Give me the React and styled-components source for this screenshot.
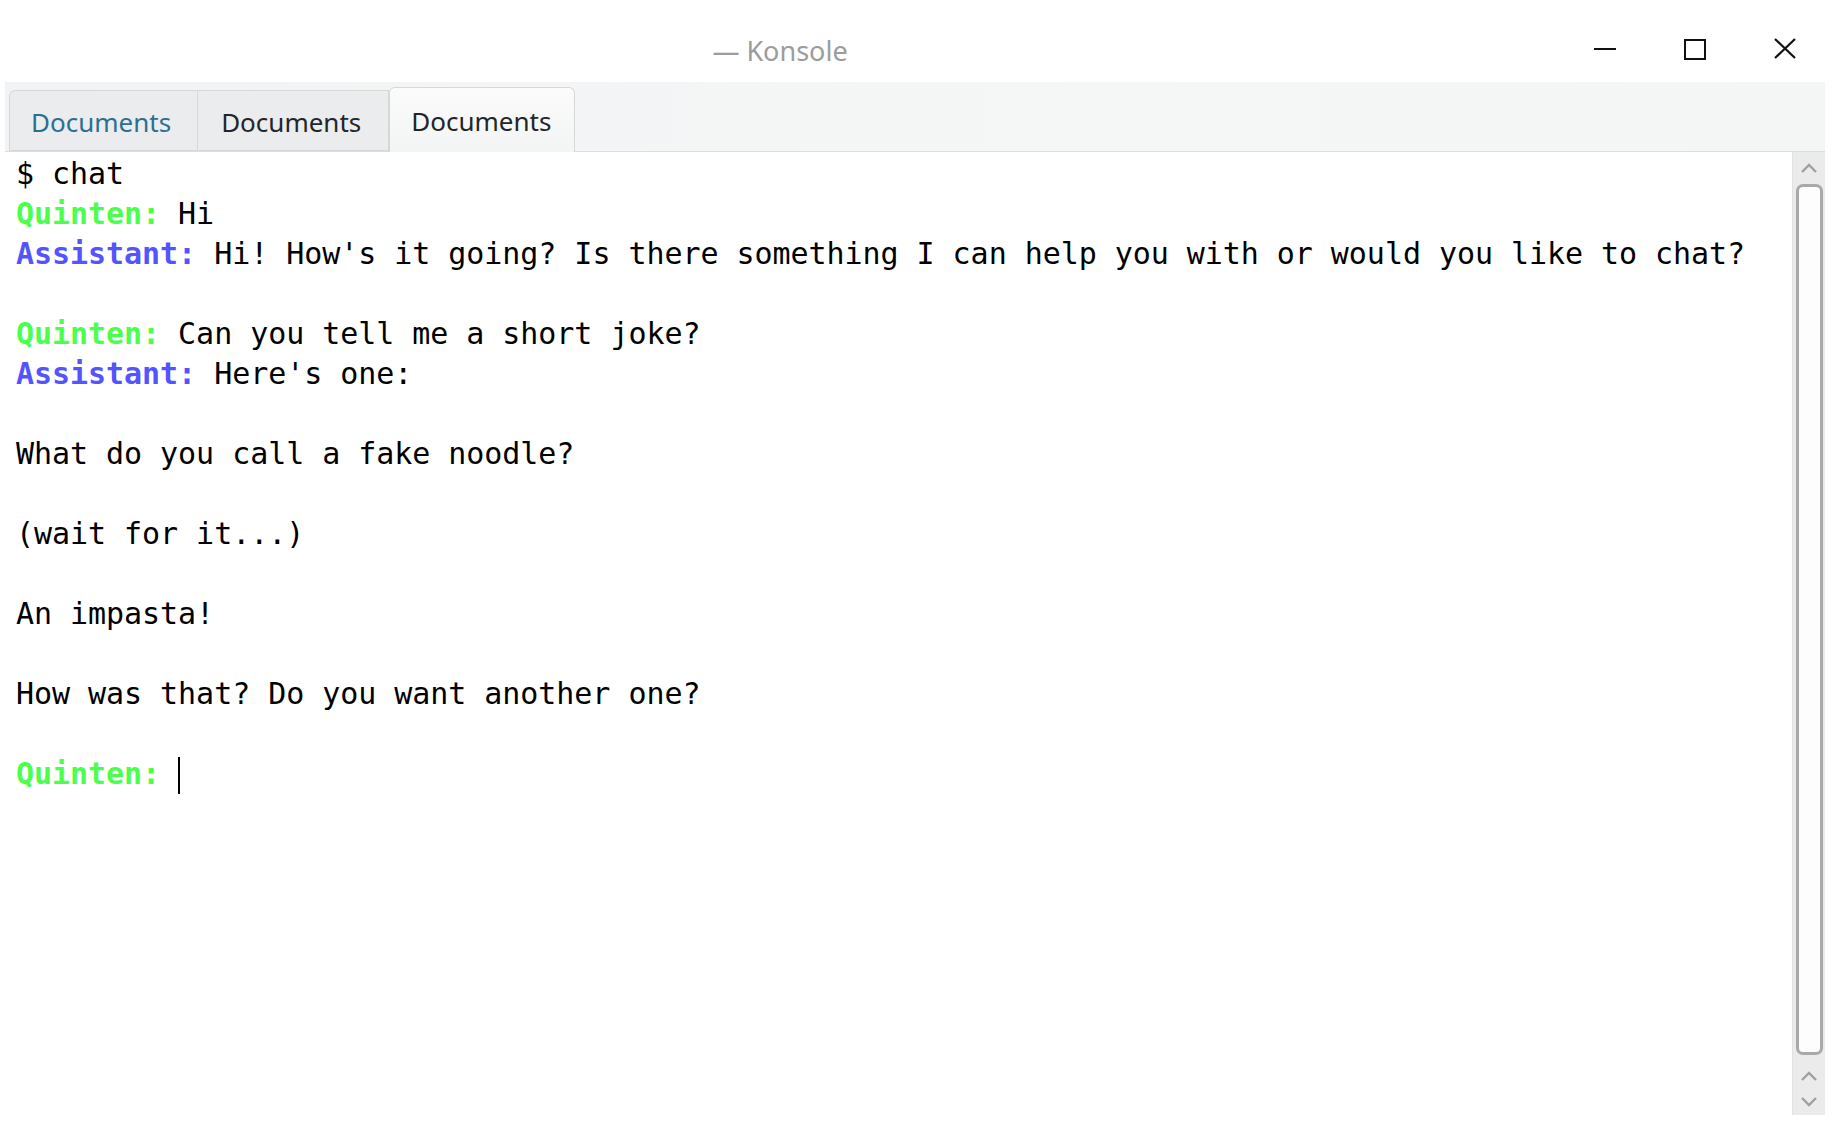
import React from "react";
import styled, { createGlobalStyle } from "styled-components";

const GlobalStyle = createGlobalStyle`
  html, body {
    margin: 0;
    padding: 0;
    background: #ffffff;
  }
  body {
    width: 1834px;
    height: 1124px;
    overflow: hidden;
  }
`;

const Window = styled.div`
  display: flex;
  flex-direction: column;
  width: 1834px;
  height: 1124px;
  background: #ffffff;
`;

const TitleBar = styled.div`
  display: flex;
  align-items: center;
  height: 82px;
  padding-top: 16px;
  box-sizing: border-box;
`;

const Title = styled.div`
  flex: 1;
  text-align: center;
  padding-top: 2px;
  font-family: "Noto Sans", "Open Sans", sans-serif;
  font-size: 27px;
  color: #9c9c9c;
`;

const WindowButtons = styled.div`
  display: flex;
  width: 270px;
  margin-right: 4px;
`;

const WindowButton = styled.div`
  display: flex;
  align-items: center;
  justify-content: center;
  width: 90px;
  height: 40px;
`;

const TabBar = styled.div`
  display: flex;
  align-items: flex-end;
  height: 70px;
  margin: 0 9px 0 5px;
  padding-left: 4px;
  background: linear-gradient(to right, #f2f3f4, #f5f6f6 60%, #f4f5f5);
  border-bottom: 1px solid #dcdddd;
  box-sizing: border-box;
`;

const Tab = styled.div`
  display: flex;
  align-items: center;
  height: ${(p) => (p.active ? "65px" : "61px")};
  margin-bottom: ${(p) => (p.active ? "-1px" : "0")};
  padding: 2px ${(p) => p.padRight || "24px"} 0 ${(p) => p.padLeft || "24px"};
  box-sizing: border-box;
  font-family: "Noto Sans", "Open Sans", sans-serif;
  font-size: 26px;
  color: ${(p) => p.color || "#232629"};
  background: ${(p) =>
    p.active ? "linear-gradient(#fbfbfb, #f3f4f4)" : "#ebecee"};
  border: 1px solid #d6d7d8;
  border-bottom: ${(p) => (p.active ? "none" : "1px solid #d6d7d8")};
  border-left: ${(p) => (p.first || p.active ? "1px solid #d6d7d8" : "none")};
  border-radius: ${(p) =>
    p.active ? "6px 6px 0 0" : p.first ? "6px 0 0 0" : "0"};
`;

const Body = styled.div`
  flex: 1;
  display: flex;
  margin: 0 9px 9px 5px;
  min-height: 0;
`;

const Terminal = styled.div`
  flex: 1;
  padding: 2px 0 0 11px;
  font-family: "DejaVu Sans Mono", "Liberation Mono", monospace;
  font-size: 30px;
  letter-spacing: -0.05px;
  color: #000000;
  background: #ffffff;
`;

const Line = styled.div`
  height: 40px;
  line-height: 40px;
  white-space: pre;
`;

const Speaker = styled.span`
  font-weight: bold;
  color: ${(p) => p.color};
`;

const Cursor = styled.span`
  display: inline-block;
  width: 2px;
  height: 37px;
  background: #000000;
  vertical-align: -10px;
`;

const ScrollBar = styled.div`
  display: flex;
  flex-direction: column;
  width: 33px;
  background: #ebebeb;
  border-left: 1px solid #e2e2e2;
  box-sizing: border-box;
`;

const ArrowBox = styled.div`
  display: flex;
  align-items: center;
  justify-content: center;
  height: ${(p) => p.h || "28px"};
`;

const Handle = styled.div`
  flex: 1;
  margin: 0 2px 0 3px;
  border: 3px solid #a9a9a9;
  border-radius: 7px;
  background: #fdfdfd;
`;

const BottomArrows = styled.div`
  display: flex;
  flex-direction: column;
  padding-top: 8px;
  height: 60px;
  box-sizing: border-box;
`;

const Chevron = ({ down }) => (
  <svg width="18" height="12" viewBox="0 0 18 12">
    <polyline
      points={down ? "2,2 9,9 16,2" : "2,10 9,3 16,10"}
      fill="none"
      stroke="#a0a0a0"
      strokeWidth="2.4"
    />
  </svg>
);

const GREEN = "#4cff4c";
const BLUE = "#5454ff";

const lines = [
  { text: "$ chat" },
  { who: "Quinten:", color: GREEN, text: " Hi" },
  {
    who: "Assistant:",
    color: BLUE,
    text: " Hi! How's it going? Is there something I can help you with or would you like to chat?",
  },
  { text: "" },
  { who: "Quinten:", color: GREEN, text: " Can you tell me a short joke?" },
  { who: "Assistant:", color: BLUE, text: " Here's one:" },
  { text: "" },
  { text: "What do you call a fake noodle?" },
  { text: "" },
  { text: "(wait for it...)" },
  { text: "" },
  { text: "An impasta!" },
  { text: "" },
  { text: "How was that? Do you want another one?" },
  { text: "" },
];

export default function App() {
  return (
    <>
      <GlobalStyle />
      <Window>
        <TitleBar>
          <Title>— Konsole</Title>
          <WindowButtons>
            <WindowButton>
              <svg width="24" height="24" viewBox="0 0 24 24">
                <line x1="1" y1="12" x2="23" y2="12" stroke="#111" strokeWidth="2" />
              </svg>
            </WindowButton>
            <WindowButton>
              <svg width="24" height="24" viewBox="0 0 24 24">
                <rect x="2" y="3" width="20" height="19" fill="none" stroke="#111" strokeWidth="2" />
              </svg>
            </WindowButton>
            <WindowButton>
              <svg width="24" height="24" viewBox="0 0 24 24">
                <line x1="2" y1="2" x2="22" y2="21" stroke="#111" strokeWidth="2.2" />
                <line x1="22" y1="2" x2="2" y2="21" stroke="#111" strokeWidth="2.2" />
              </svg>
            </WindowButton>
          </WindowButtons>
        </TitleBar>
        <TabBar>
          <Tab first color="#2d6f91" padLeft="21px" padRight="26px">Documents</Tab>
          <Tab padLeft="23px" padRight="27px">Documents</Tab>
          <Tab active padLeft="21px" padRight="23px">Documents</Tab>
        </TabBar>
        <Body>
          <Terminal>
            {lines.map((l, i) => (
              <Line key={i}>
                {l.who && <Speaker color={l.color}>{l.who}</Speaker>}
                {l.text}
              </Line>
            ))}
            <Line>
              <Speaker color={GREEN}>Quinten:</Speaker> <Cursor />
            </Line>
          </Terminal>
          <ScrollBar>
            <ArrowBox h="32px">
              <Chevron />
            </ArrowBox>
            <Handle />
            <BottomArrows>
              <ArrowBox h="26px">
                <Chevron />
              </ArrowBox>
              <ArrowBox h="26px">
                <Chevron down />
              </ArrowBox>
            </BottomArrows>
          </ScrollBar>
        </Body>
      </Window>
    </>
  );
}
